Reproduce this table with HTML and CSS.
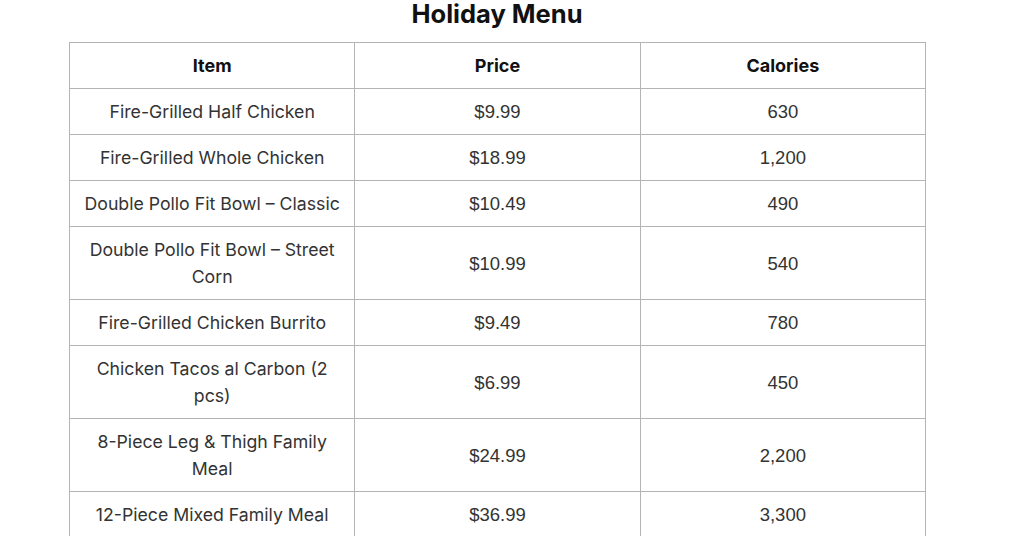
FILE: index.html
```html
<!DOCTYPE html>
<html>
<head>
<meta charset="utf-8">
<link rel="stylesheet" href="styles.css">
</head>
<body>
<div class="wrap">
  <h2 class="title">Holiday Menu</h2>
  <table class="menu">
    <thead>
      <tr><th>Item</th><th>Price</th><th>Calories</th></tr>
    </thead>
    <tbody>
      <tr><td>Fire-Grilled Half Chicken</td><td class="num">$9.99</td><td class="num">630</td></tr>
      <tr><td>Fire-Grilled Whole Chicken</td><td class="num">$18.99</td><td class="num">1,200</td></tr>
      <tr><td>Double Pollo Fit Bowl – Classic</td><td class="num">$10.49</td><td class="num">490</td></tr>
      <tr><td>Double Pollo Fit Bowl – Street Corn</td><td class="num">$10.99</td><td class="num">540</td></tr>
      <tr><td>Fire-Grilled Chicken Burrito</td><td class="num">$9.49</td><td class="num">780</td></tr>
      <tr><td>Chicken Tacos al Carbon (2 pcs)</td><td class="num">$6.99</td><td class="num">450</td></tr>
      <tr><td>8-Piece Leg &amp; Thigh Family Meal</td><td class="num">$24.99</td><td class="num">2,200</td></tr>
      <tr><td>12-Piece Mixed Family Meal</td><td class="num">$36.99</td><td class="num">3,300</td></tr>
    </tbody>
  </table>
</div>
</body>
</html>
```
FILE: styles.css
```css
html, body {
  margin: 0;
  padding: 0;
  background: #ffffff;
}
body {
  font-family: Inter, "Noto Sans", sans-serif;
  color: #333333;
}
.wrap {
  width: 856px;
  margin-left: 69px;
}
.title {
  margin: 0;
  padding-top: 1px;
  height: 41px;
  font-size: 25.5px;
  line-height: 26px;
  font-weight: 700;
  color: #111111;
  text-align: center;
}
.menu {
  width: 857px;
  border-collapse: collapse;
  table-layout: fixed;
}
.menu th, .menu td {
  border: 1px solid #b4b4b4;
  padding: 9px 10px;
  text-align: center;
  font-size: 17.7px;
  line-height: 27px;
}
.menu th {
  font-weight: 700;
  color: #111111;
  font-size: 18px;
}
.menu td.num {
  font-family: "Liberation Sans", Arial, sans-serif;
  font-size: 18.5px;
}
```
